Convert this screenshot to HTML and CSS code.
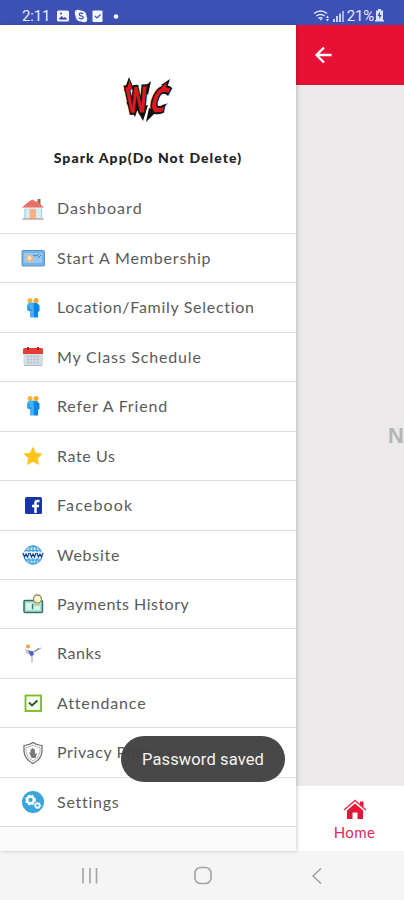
FILE: index.html
```html
<!DOCTYPE html>
<html lang="en">
<head>
<meta charset="utf-8">
<title>Spark App</title>
<link rel="stylesheet" href="styles.css">
</head>
<body>
<svg class="defs" width="0" height="0" aria-hidden="true">
  <symbol id="people" viewBox="0 0 24 24">
    <circle cx="9" cy="4.500" r="2.500" fill="#f9b233"/><circle cx="15" cy="4.500" r="2.500" fill="#ffa51f"/>
    <path d="M8 6.500h5v15H9v-6l-3-1V9z" fill="#45b3f5"/><path d="M12.500 7H16l2.500 2.500V15L17 16v5.500h-4z" fill="#0787e8"/>
    <path d="M8 10v4h3M16 10v4h-2" fill="none" stroke="#1670c8" stroke-width=".7"/>
  </symbol>
</svg>
<header class="status">
  <span class="clock">2:11</span>
  <svg class="notes" width="66" height="14" viewBox="0 0 66 14">
    <rect x="1" y="1.500" width="12" height="11" rx="1.500" fill="#f4f6ff"/><path d="M3 10l2.500-3 2 2 1.500-1 2.500 2.500H3z" fill="#3848a0"/><circle cx="5" cy="4.500" r="1" fill="#3848a0"/>
    <circle cx="25" cy="7" r="5.500" fill="#f4f6ff"/><circle cx="22" cy="4" r="3.200" fill="#f4f6ff"/><circle cx="28" cy="10" r="3.200" fill="#f4f6ff"/>
    <path d="M27.200 5c-1-1.400-4-1-4 .5 0 1.800 4.200 1 4.200 3 0 1.600-3.500 1.800-4.500.2" fill="none" stroke="#3f51b5" stroke-width="1.200"/>
    <rect x="36.500" y="1.500" width="10" height="11.500" rx="1" fill="#f4f6ff"/><path d="M39 7l2 2 3.500-3.500" fill="none" stroke="#3f51b5" stroke-width="1.200"/>
    <circle cx="60" cy="7.500" r="2.300" fill="#f4f6ff"/>
  </svg>
  <svg class="signal" width="34" height="14" viewBox="0 0 34 14">
    <g fill="none" stroke="#e5e9ff" stroke-width="1.500"><path d="M1 4.500q6.500-5 13 0M3.300 7q4.200-3.200 8.500 0M5.500 9.500q2-1.500 4 0"/></g>
    <path d="M7 10h2l-1 2zM13 9l1.500-2.500L16 9zM13 10h3l-1.500 2.500z" fill="#e5e9ff"/>
    <path d="M20 10h2v3h-2zM23 7h2v6h-2zM26 4.500h2V13h-2z" fill="#ccd3fa"/><path d="M29 2h2v11h-2z" fill="#a7b2ec"/>
  </svg>
  <span class="battery">21%</span>
  <svg class="cell" width="9" height="13" viewBox="0 0 9 13"><path d="M3 0h3v1.500h2V12H1V1.500h2z" fill="#dce1ff"/><path d="M5 2.500L2.500 7h1.800v3L6.800 6H5z" fill="#3f51b5"/><path d="M0 11h9v1.500H0z" fill="#dce1ff"/></svg>
</header>
<div class="main">
  <aside class="drawer">
    <div class="profile">
      <svg class="logo" width="54" height="50" viewBox="0 0 54 50">
        <path d="M3 17L8 3l5 12zM21 15l9-8-3 14zM40 11l9-6-3 9zM5 28l9 15 4-12zM15 34l7 13 5-16zM28 34l-3 14 11-11zM38 38l9-9-8 4z" fill="#111"/>
        <g class="logo-text"><text x="0" y="0" font-size="36" textLength="21" lengthAdjust="spacingAndGlyphs" transform="translate(7 39) rotate(-3) skewX(8)">W</text><text x="0" y="0" font-size="34" textLength="16" lengthAdjust="spacingAndGlyphs" transform="translate(28 38) skewX(-10)">C</text></g>
        <path d="M6 15L8.500 6l3 10zM40 14l6-6-2 8z" fill="#dc1821"/>
      </svg>
      <h1>Spark App(Do Not Delete)</h1>
    </div>
    <ul class="menu">
      <li><svg viewBox="0 0 24 24"><path d="M16.500 2h3v6h-3z" fill="#9b6957"/><path d="M3.500 10L12 4l8.500 6v11.500h-17z" fill="#d3f0f6"/><path d="M1 10.500L6 6l5-3.500L18 6l5 4.500z" fill="#ee6e68"/><path d="M8.500 12h6.500v9.500H8.500z" fill="#ffb183"/><path d="M4 12v9.500M20.500 12v9.500" stroke="#91cfdb"/><path d="M1.500 22h21" stroke="#b98986" stroke-width="1.200"/></svg><span class="t1">Dashboard</span></li>
      <li><svg viewBox="0 0 24 24"><rect x="1" y="4.500" width="22.500" height="15.500" rx="1" fill="#72b5ed" stroke="#608fc0"/><path d="M3 7h18v10H3z" fill="#92caf7"/><path d="M4 8l3 2 2-2 2 2 2-1-1 3 1 4-4 1-3-2z" fill="#e6b78e"/><path d="M12 9l3 1 3-2M17 12l3-3" stroke="#4879ac" fill="none"/><circle cx="8.500" cy="12" r="2" fill="#ffe5c5"/></svg><span class="t2">Start A Membership</span></li>
      <li><svg viewBox="0 0 24 24"><use href="#people"/></svg><span class="t3">Location/Family Selection</span></li>
      <li><svg viewBox="0 0 24 24"><rect x="2.500" y="5" width="19.500" height="16" rx="1.500" fill="#d4dce4"/><path d="M2 9V4.500Q2 3 3.500 3h17Q22 3 22 4.500V9z" fill="#e64036"/><path d="M7 2v3M17 2v3" stroke="#8d2930" stroke-width="2"/><path d="M6 11.500h12M6 14.500h12M6 17.500h12" stroke="#b3bfcc" stroke-width="1.700" stroke-dasharray="2 1.300"/><path d="M3 20.500h18" stroke="#aebac7"/></svg><span class="t4">My Class Schedule</span></li>
      <li><svg viewBox="0 0 24 24"><use href="#people"/></svg><span class="t5">Refer A Friend</span></li>
      <li><svg viewBox="0 0 24 24"><path d="M12 3.500l2.700 5.700 6 .8-4.400 4.200 1.100 6.100-5.400-3-5.400 3 1.100-6.100L3.300 10l6-.8z" fill="#ffc51c" stroke="#ffc51c" stroke-linejoin="round"/></svg><span class="t6">Rate Us</span></li>
      <li><svg viewBox="0 0 24 24"><rect x="4" y="4" width="17" height="17" rx="1.500" fill="#1735a9"/><path d="M18.500 8h-2q-2 0-2 2v10M11 13h7" fill="none" stroke="#fff" stroke-width="2.500"/></svg><span class="t7">Facebook</span></li>
      <li><svg viewBox="0 0 24 24"><g fill="none" stroke="#4aa5dc" stroke-width="1.300"><circle cx="12" cy="12" r="9" fill="#dff2ff"/><ellipse cx="12" cy="12" rx="4.500" ry="9"/><path d="M12 3v18M4 7.500h16M4 17h16"/></g><path d="M1 9h22v6H1z" fill="#e6f4ff"/><path d="M2 10l1.500 4L5 11l1.500 3L8 10m1 0l1.500 4 1.500-3 1.500 3 1.500-4m1 0l1.500 4 1.500-3 1.500 3 1.500-4" fill="none" stroke="#17408e" stroke-width="1.200"/></svg><span class="t8">Website</span></li>
      <li><svg viewBox="0 0 24 24"><rect x="3" y="8.500" width="18.500" height="12" rx="1" fill="#a6e0d0" stroke="#3c6b63" stroke-width="1.500"/><path d="M5 11h6v7H5zM13 14h6v4h-6z" fill="#d7f4e9"/><path d="M11.500 12v5" stroke="#48796d" stroke-width="1.300"/><circle cx="16.500" cy="7" r="4" fill="#fff8ce" stroke="#8b8760" stroke-width="1.300"/><path d="M14 12h5" stroke="#e3bf63" stroke-width="2"/></svg><span class="t9">Payments History</span></li>
      <li><svg viewBox="0 0 24 24"><circle cx="7" cy="4.500" r="2" fill="#efa13c"/><path d="M4 8l4 1 4 1 8-4M11 11v9.500" fill="none" stroke="#c2bfc8" stroke-width="1.600"/><path d="M7 8.500l5 1 1 3-3 2z" fill="#4e5fd0"/><path d="M5 10l6 3M13 10l5-4" stroke="#666278" stroke-width=".7"/></svg><span class="t10">Ranks</span></li>
      <li><svg viewBox="0 0 24 24"><rect x="4.500" y="4.500" width="15.500" height="15.500" fill="#fbfff1" stroke="#78bd20" stroke-width="1.800"/><path d="M8 11.500l3 3 5.500-5" fill="none" stroke="#245b27" stroke-width="1.800"/></svg><span class="t11">Attendance</span></li>
      <li><svg viewBox="0 0 24 24"><g fill="none" stroke="#66686b" stroke-width="1.200"><path d="M12 1.500Q8 4.500 3 4.500v6Q3.500 18 12 22.500 20.500 18 21 10.500v-6Q16 4.500 12 1.500z"/><path d="M12 4Q9 6 5 6.500v4.500q.5 5.500 7 9 6.500-3.500 7-9V6.500Q15 6 12 4z" stroke-width=".5"/></g><path d="M8 11l1.500 1V8.500l1-.5.7-1 1.200.7 1.200.3.700 5 1.700-1-1.500 5h-4z" fill="#77797b"/></svg><span class="t12">Privacy Policy</span></li>
      <li><svg viewBox="0 0 24 24"><circle cx="12" cy="12" r="11" fill="#3aa5dc"/><g fill="none" stroke="#fff"><circle cx="9.500" cy="10" r="3.400" stroke-width="2.500"/><circle cx="9.500" cy="10" r="4.800" stroke-width="1.200" stroke-dasharray="2 1.900"/><circle cx="16.500" cy="15.500" r="2.100" stroke-width="1.600"/><circle cx="16.500" cy="15.500" r="3.100" stroke-width=".9" stroke-dasharray="1.500 1.100"/></g></svg><span class="t13">Settings</span></li>
    </ul>
  </aside>
  <section class="page">
    <div class="appbar"><svg width="20" height="20" viewBox="0 0 20 20"><path d="M18.500 10H3.500M11 2.500L3.500 10l7.500 7.500" fill="none" stroke="#fff" stroke-width="2.300"/></svg></div>
    <div class="content"><span>N</span></div>
    <div class="tab">
      <svg width="26" height="22" viewBox="0 0 26 22"><path d="M18 2.500h3.500v6L18 6z" fill="#e71639"/><path d="M2 11L13 1.500 24 11" fill="none" stroke="#e7304f" stroke-width="1.500"/><path d="M5 11.500l8-7 8 7V20h-5.500v-6.500h-5V20H5z" fill="#e71639"/></svg>
      <span>Home</span>
    </div>
  </section>
</div>
<nav class="nav">
  <svg width="18" height="18" viewBox="0 0 18 18"><path d="M2 1v15.500M9 1v15.500M15.500 1v15.500" stroke="#a3a3a3" stroke-width="1.600"/></svg>
  <svg width="20" height="20" viewBox="0 0 20 20"><rect x="2" y="1.500" width="16" height="16" rx="5.500" fill="none" stroke="#a3a3a3" stroke-width="1.600"/></svg>
  <svg width="12" height="18" viewBox="0 0 12 18"><path d="M10 1.500L2 9l8 7.500" fill="none" stroke="#a0a0a0" stroke-width="1.500"/></svg>
</nav>
<div class="toast">Password saved</div>
</body>
</html>
```

FILE: styles.css
```css
* { box-sizing: border-box; }
body { margin: 0; width: 404px; height: 900px; display: flex; flex-direction: column; position: relative; overflow: hidden; background: #f5f5f5; font-family: Lato, sans-serif; }
.defs { position: absolute; }
svg { display: block; flex: none; }
.status { height: 25px; flex: none; background: #3d50b5; display: flex; align-items: center; padding: 6px 20px 0 22px; color: #e8ecff; font: 15px/18px Roboto, sans-serif; }
.clock { width: 34px; letter-spacing: -.2px; }
.signal { margin-left: auto; }
.battery { font-size: 15px; letter-spacing: -.2px; }
.cell { margin-left: 1px; }
.main { height: 826px; flex: none; display: flex; }
.drawer { width: 296px; background: #fafafa; box-shadow: 1px 0 4px rgba(0,0,0,.2); z-index: 1; }
.profile { height: 159.500px; background: #fff; display: flex; flex-direction: column; align-items: center; padding-top: 49px; }
.logo { overflow: visible; }
.logo-text { font: italic bold 32px "Open Sans", sans-serif; fill: #dc1821; stroke: #111; stroke-width: 4px; paint-order: stroke; stroke-linejoin: miter; }
h1 { margin: 24px 0 0; font-size: 14px; line-height: 20px; font-weight: 900; color: #222; letter-spacing: 1.080px; white-space: nowrap; }
.menu { list-style: none; margin: 0; padding: 0; }
.menu li { height: 49.450px; display: flex; align-items: center; gap: 12px; padding: 0 0 0 21px; background: #fff; border-bottom: 1.500px solid #dedede; color: #5a5a5a; font-size: 16px; letter-spacing: .6px; white-space: nowrap; }
.menu svg { width: 24px; height: 24px; }
.menu span { margin-top: -1.500px; }
.menu .t1 { letter-spacing: 1.050px; }
.menu .t2, .menu .t4, .menu .t5 { letter-spacing: .820px; }
.menu .t3 { letter-spacing: .700px; }
.menu .t7 { letter-spacing: 1.150px; }
.menu .t8, .menu .t13 { letter-spacing: .750px; }
.menu .t9 { letter-spacing: .500px; }
.menu .t11 { letter-spacing: .850px; }
.page { flex: 1; display: flex; flex-direction: column; }
.appbar { height: 60px; background: #e91035; border-bottom: 1px solid #cf1835; padding: 20px 0 0 17px; }
.content { flex: 1; background: #ebe9ea; overflow: hidden; padding: 338px 0 0 92px; color: #b5b5b5; font: bold 22px/26px "Liberation Sans", sans-serif; }
.tab { height: 65px; background: #fff; display: flex; flex-direction: column; align-items: center; padding: 13px 0 0 9px; color: #e62950; font-size: 15px; letter-spacing: .4px; line-height: 20px; }
.tab span { margin-top: 1px; }
.nav { height: 49px; flex: none; display: flex; align-items: center; padding-left: 81px; background: #f5f5f5; }
.nav svg + svg { margin-left: 94px; }
.nav svg:last-child { margin-left: 98px; }
.toast { position: absolute; left: 121px; top: 736px; width: 164px; height: 46px; border-radius: 23px; background: rgba(65,65,65,.96); color: #f4f4f4; font: 16.500px/47px Roboto, sans-serif; letter-spacing: .12px; text-align: center; z-index: 2; }
```
